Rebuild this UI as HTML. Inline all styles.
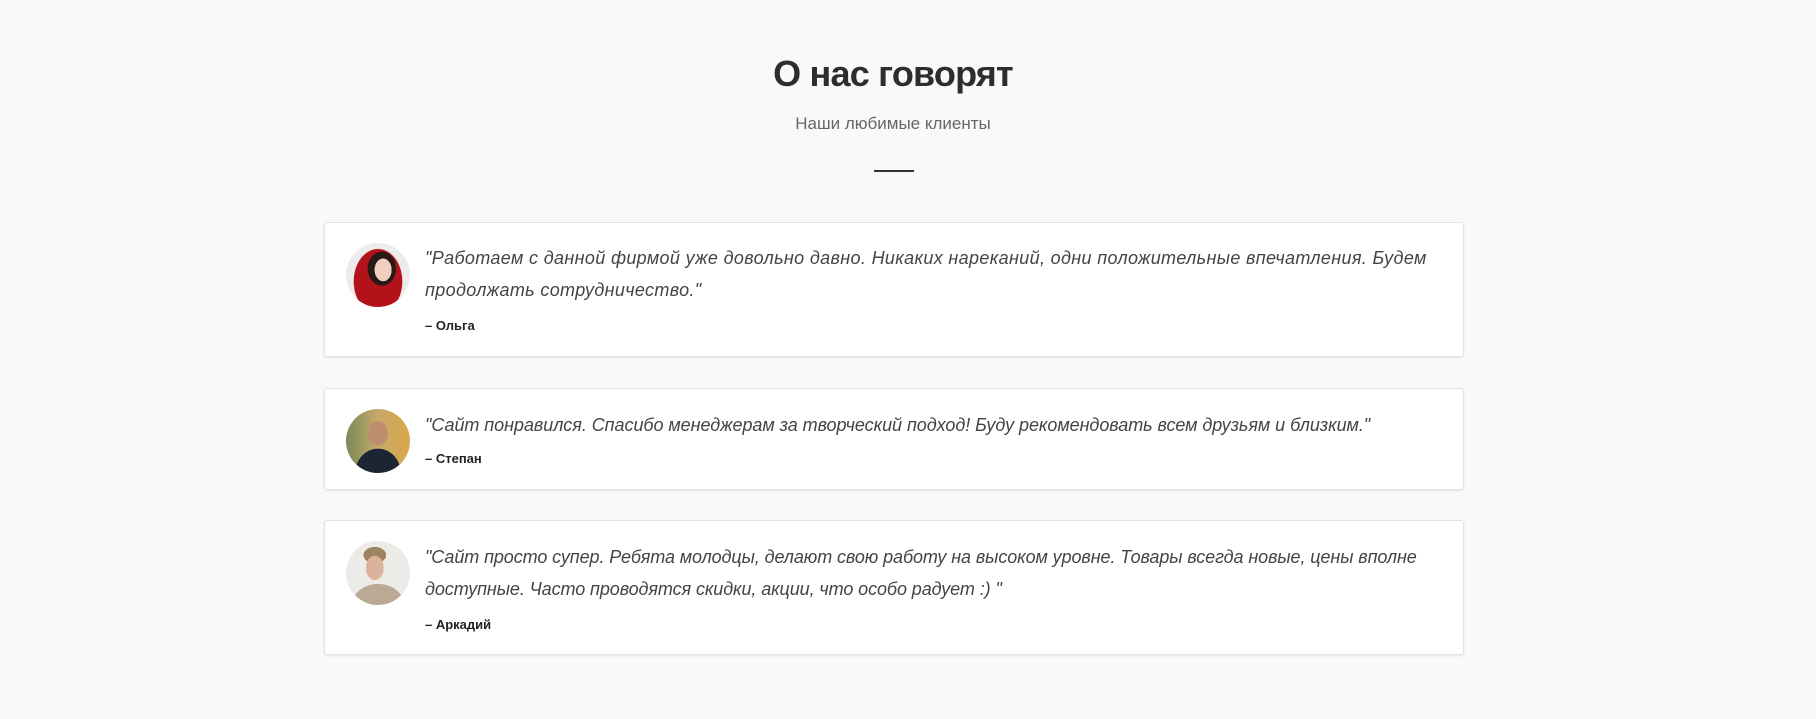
<!DOCTYPE html>
<html><head><meta charset="utf-8"><style>
html,body{margin:0;padding:0;background:#f9f9f9;width:1816px;height:719px;overflow:hidden;font-family:"Liberation Sans",sans-serif;color:#333}
h1{position:absolute;left:0;width:1786px;text-align:center;top:51px;margin:0;font-size:36px;font-weight:bold;color:#2d2d2d;line-height:46px;letter-spacing:-0.8px}
.sub{position:absolute;left:0;width:1786px;text-align:center;top:114px;font-size:17px;color:#666;font-weight:300}
.bar{position:absolute;left:874px;top:170px;width:40px;height:2px;background:#333}
.card{position:absolute;left:324px;width:1138px;background:#fff;border:1px solid #e3e3e3;border-radius:3px;box-shadow:0 1px 2px rgba(0,0,0,.08)}
.av{position:absolute;left:21px;width:64px;height:64px;border-radius:50%;overflow:hidden}
.q{position:absolute;left:100px;font-style:italic;font-size:18px;line-height:32px;color:#444;white-space:nowrap;letter-spacing:0.35px}
.a{position:absolute;left:100px;font-size:13px;font-weight:bold;color:#222}
</style></head><body>
<h1>О нас говорят</h1>
<div class="sub">Наши любимые клиенты</div>
<div class="bar"></div>

<div class="card" style="top:222px;height:133px">
 <div class="av" style="top:20px;background:radial-gradient(ellipse 12px 16px at 58% 42%,#f0cfc0 0 70%,transparent 72%),radial-gradient(ellipse 20px 24px at 56% 40%,#2a1a16 0 70%,transparent 72%),radial-gradient(ellipse 30px 40px at 50% 60%,#b3121b 0 80%,transparent 82%),#ececec"></div>
 <div class="q" style="top:19px">"Работаем с данной фирмой уже довольно давно. Никаких нареканий, одни положительные впечатления. Будем<br>продолжать сотрудничество."</div>
 <div class="a" style="top:95px">– Ольга</div>
</div>

<div class="card" style="top:388px;height:100px">
 <div class="av" style="top:20px;background:radial-gradient(ellipse 12px 15px at 50% 38%,#c08c70 0 80%,transparent 82%),radial-gradient(ellipse 28px 30px at 50% 100%,#1d2433 0 80%,transparent 82%),linear-gradient(90deg,#7a8a5a,#c6a86a 50%,#d9a84a)"></div>
 <div class="q" style="top:20px;letter-spacing:-0.05px">"Сайт понравился. Спасибо менеджерам за творческий подход! Буду рекомендовать всем друзьям и близким."</div>
 <div class="a" style="top:62px">– Степан</div>
</div>

<div class="card" style="top:520px;height:133px">
 <div class="av" style="top:20px;background:radial-gradient(ellipse 11px 15px at 45% 42%,#d9b39c 0 80%,transparent 82%),radial-gradient(ellipse 14px 10px at 45% 22%,#9d8360 0 80%,transparent 82%),radial-gradient(ellipse 32px 26px at 50% 100%,#b9a995 0 80%,transparent 82%),#ecebe8"></div>
 <div class="q" style="top:20px;letter-spacing:-0.09px">"Сайт просто супер. Ребята молодцы, делают свою работу на высоком уровне. Товары всегда новые, цены вполне<br>доступные. Часто проводятся скидки, акции, что особо радует :) "</div>
 <div class="a" style="top:96px">– Аркадий</div>
</div>
</body></html>
